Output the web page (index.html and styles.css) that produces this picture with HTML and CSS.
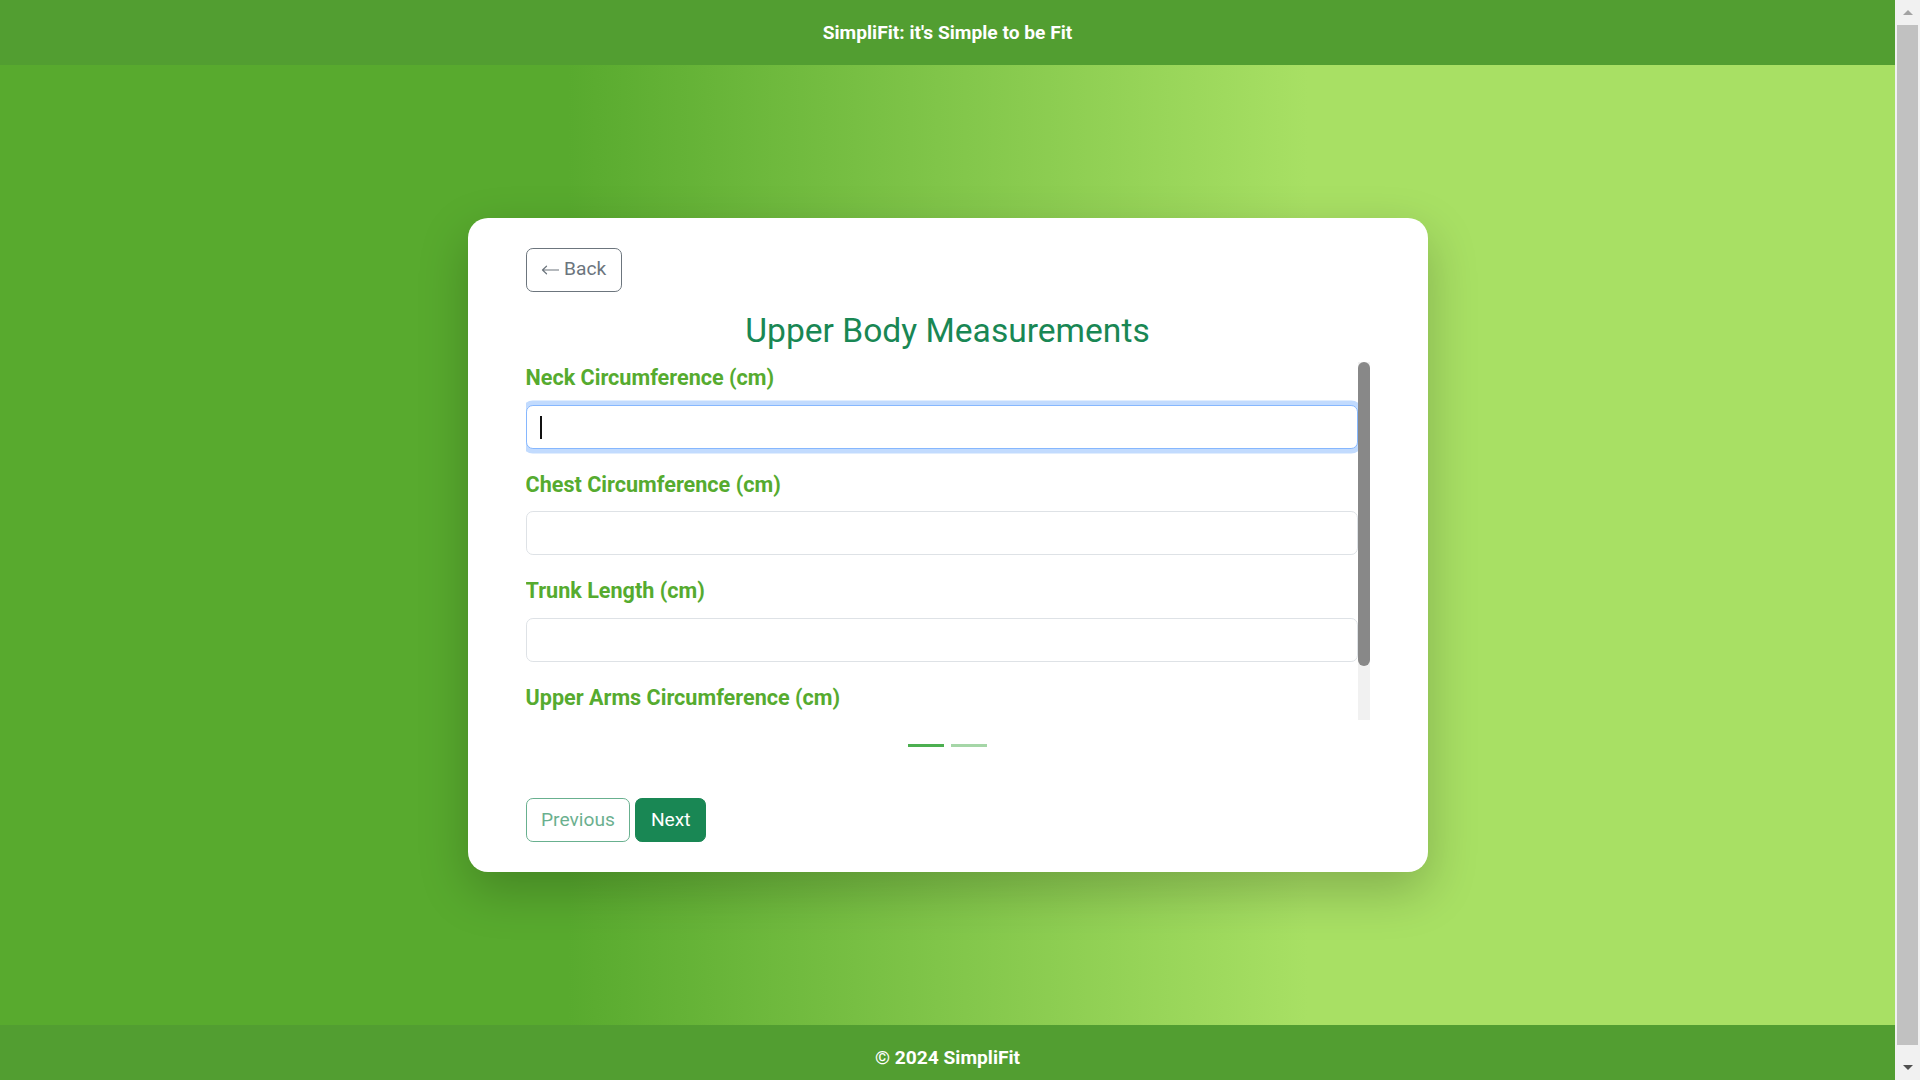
FILE: index.html
```html
<!DOCTYPE html>
<html lang="en">
<head>
<meta charset="utf-8">
<title>SimpliFit</title>
<link rel="stylesheet" href="styles.css">
</head>
<body>
<div class="page">
  <header class="topbar">SimpliFit: it's Simple to be Fit</header>
  <main class="stage">
    <section class="card">
      <div class="back-row">
        <button class="btn btn-back" type="button">
          <svg class="arrow" width="18" height="10" viewBox="0 0 18 10" aria-hidden="true"><path d="M17.5 5H1.5M5.5 1.2L1.5 5l4 3.8" fill="none" stroke="#6c757d" stroke-width="1.2" stroke-linecap="round" stroke-linejoin="round"/></svg>
          <span>Back</span>
        </button>
      </div>
      <h2 class="title">Upper Body Measurements</h2>
      <div class="form-scroll">
        <div class="form-fields">
          <div class="field">
            <label class="label">Neck Circumference (cm)</label>
            <div class="input-wrap">
              <input class="input is-focused" type="text">
              <span class="caret"></span>
            </div>
          </div>
          <div class="field">
            <label class="label">Chest Circumference (cm)</label>
            <div class="input-wrap"><input class="input" type="text"></div>
          </div>
          <div class="field">
            <label class="label">Trunk Length (cm)</label>
            <div class="input-wrap"><input class="input" type="text"></div>
          </div>
          <div class="field">
            <label class="label">Upper Arms Circumference (cm)</label>
            <div class="input-wrap"><input class="input" type="text"></div>
          </div>
        </div>
        <div class="mini-scrollbar"><div class="mini-thumb"></div></div>
      </div>
      <div class="steps">
        <span class="step step-active"></span>
        <span class="step"></span>
      </div>
      <div class="actions">
        <button class="btn btn-prev" type="button">Previous</button>
        <button class="btn btn-next" type="button">Next</button>
      </div>
    </section>
  </main>
  <footer class="bottombar">&copy; 2024 SimpliFit</footer>
</div>
<aside class="vscroll">
  <div class="vs-btn"><span class="tri-up"></span></div>
  <div class="vs-track"><div class="vs-thumb"></div></div>
  <div class="vs-btn"><span class="tri-down"></span></div>
</aside>
</body>
</html>
```
FILE: styles.css
```css
html, body {
  margin: 0;
  padding: 0;
}
body {
  font-family: Roboto, "Liberation Sans", Arial, sans-serif;
  color: #212529;
  display: flex;
  height: 1080px;
  overflow: hidden;
}

.page {
  flex: 1;
  display: flex;
  flex-direction: column;
  min-width: 0;
}

/* fake page scrollbar */
.vscroll {
  width: 25px;
  flex: none;
  height: 1080px;
  background: #f1f1f1;
  display: flex;
  flex-direction: column;
}
.vs-btn {
  height: 25px;
  flex: none;
  display: flex;
  align-items: center;
  justify-content: center;
}
.tri-up {
  width: 0;
  height: 0;
  border-left: 5.5px solid transparent;
  border-right: 5.5px solid transparent;
  border-bottom: 5px solid #a3a3a3;
}
.tri-down {
  width: 0;
  height: 0;
  border-left: 5.5px solid transparent;
  border-right: 5.5px solid transparent;
  border-top: 5px solid #505050;
}
.vs-track {
  flex: 1;
  padding: 0 2px;
}
.vs-thumb {
  height: 1020px;
  background: #c1c1c1;
}

.topbar {
  height: 65px;
  flex: none;
  background: #529e31;
  color: #fff;
  font-weight: 700;
  font-size: 19.2px;
  display: flex;
  align-items: center;
  justify-content: center;
}
.stage {
  height: 960px;
  flex: none;
  background: linear-gradient(to right, #58aa2e 30%, #a8e064 69%);
  display: flex;
  align-items: center;
  justify-content: center;
}
.bottombar {
  height: 65px;
  flex: none;
  background: #529e31;
  color: #fff;
  font-weight: 700;
  font-size: 19.2px;
  display: flex;
  align-items: center;
  justify-content: center;
}

.card {
  width: 960px;
  box-sizing: border-box;
  padding: 30px 58px;
  background: #fff;
  border-radius: 20px;
  box-shadow: 0 18px 50px rgba(0, 0, 0, 0.22);
}

.btn {
  font-family: Roboto, "Liberation Sans", Arial, sans-serif;
  font-size: 19.2px;
  line-height: 28.8px;
  padding: 6.6px 14.5px;
  border-radius: 6.9px;
  border: 1px solid transparent;
  background: transparent;
  cursor: pointer;
}
.back-row {
  display: flex;
  margin-bottom: 19.4px;
}
.btn-back {
  color: #6c757d;
  border-color: #6c757d;
  display: flex;
  align-items: center;
  gap: 5px;
}
.arrow {
  display: block;
  margin-top: 1px;
}
.title {
  margin: 0 0 11px 0;
  text-align: center;
  font-weight: 400;
  font-size: 33.6px;
  line-height: 1.2;
  color: #198754;
}

.form-scroll {
  height: 358px;
  display: flex;
}
.form-fields {
  flex: 1;
  min-width: 0;
  overflow: hidden;
}
.mini-scrollbar {
  width: 12px;
  flex: none;
  background: #f1f1f1;
}
.mini-thumb {
  height: 304px;
  background: #888;
  border-radius: 6px;
}

.field {
  margin-bottom: 20px;
}
.label {
  display: block;
  font-size: 21.6px;
  line-height: 32.4px;
  font-weight: 700;
  color: #56ab2f;
  margin-bottom: 10px;
}
.input-wrap {
  position: relative;
}
.input {
  display: block;
  width: 100%;
  height: 44px;
  box-sizing: border-box;
  font-family: Roboto, "Liberation Sans", Arial, sans-serif;
  font-size: 18.4px;
  padding: 6.9px 13.8px;
  border: 1px solid #dee2e6;
  border-radius: 6.9px;
  background: #fff;
  color: #212529;
  outline: none;
}
.input.is-focused {
  border-color: #86b7fe;
  box-shadow: 0 0 0 4.6px rgba(13, 110, 253, 0.25);
}
.caret {
  position: absolute;
  left: 14px;
  top: 11px;
  width: 2px;
  height: 23px;
  background: #111;
}

.steps {
  display: flex;
  justify-content: center;
  gap: 7px;
  margin-top: 24px;
}
.step {
  width: 36px;
  height: 3px;
  background: #a5d6a7;
}
.step-active {
  background: #4caf50;
}

.actions {
  display: flex;
  gap: 5px;
  margin-top: 51px;
}
.btn-prev {
  color: #198754;
  border-color: #198754;
  opacity: 0.65;
}
.btn-next {
  color: #fff;
  background: #198754;
  border-color: #198754;
}
```
